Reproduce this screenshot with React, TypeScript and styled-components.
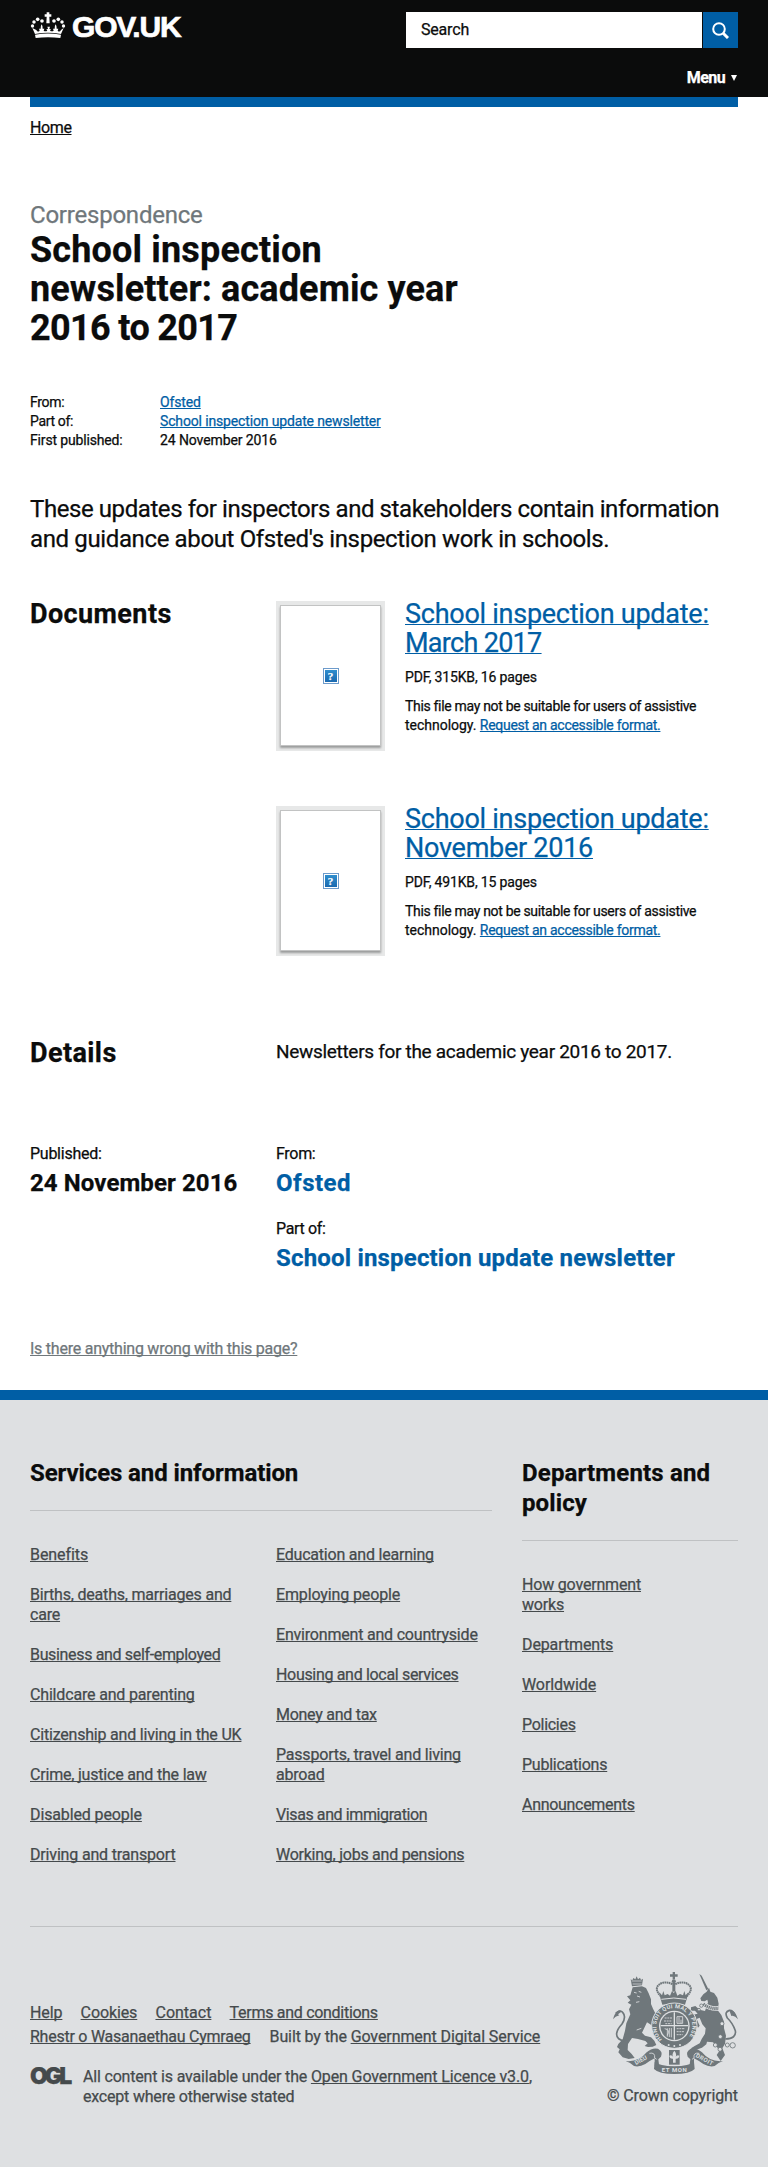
import React from "react";
import styled, { createGlobalStyle, css } from "styled-components";

const GlobalStyle = createGlobalStyle`
  *, *::before, *::after { box-sizing: border-box; }
  body {
    margin: 0;
    background: #fff;
    color: #0b0c0c;
    font-family: Roboto, "Liberation Sans", sans-serif;
    font-size: 16px;
    line-height: 20px;
    -webkit-text-stroke: 0.25px;
  }
  svg text { -webkit-text-stroke: 0; }
  h1, h2, p, dl, dd, dt, ul { margin: 0; padding: 0; font-weight: inherit; }
  ul { list-style: none; }
`;

type Track = { $track?: number };

const tracked = css<Track>`
  letter-spacing: ${({ $track = 0 }) => $track}px;
`;

const Span = styled.span<Track>`
  ${tracked}
`;

const Link = styled.a<Track & { $tone?: "ink" | "blue" | "muted" | "footer" }>`
  ${tracked}
  color: ${({ $tone }) =>
    $tone === "ink" ? "#0b0c0c" : $tone === "muted" ? "#6f777b" : $tone === "footer" ? "#454a4c" : "#005ea5"};
  text-decoration: underline;
  text-decoration-thickness: 1px;
  text-underline-offset: 1px;
  text-decoration-skip-ink: none;
`;

/* Header */

const Header = styled.header`
  display: flex;
  justify-content: space-between;
  height: 97px;
  padding: 12px 30px 0;
  background: #0b0c0c;
`;

const Brand = styled.a`
  display: flex;
  align-items: flex-start;
  gap: 6px;
  height: 30px;
  color: #fff;
`;

const BrandName = styled.span`
  font: bold 30px/30px "Liberation Sans", Arial, sans-serif;
  letter-spacing: -1.2px;
  -webkit-text-stroke: 0.7px;
`;

const HeaderTools = styled.div`
  display: flex;
  flex-direction: column;
  align-items: flex-end;
  width: 332px;
`;

const SearchForm = styled.div`
  display: flex;
  gap: 1px;
  width: 100%;
  height: 36px;
`;

const SearchField = styled.div`
  flex: 1;
  padding: 8px 15px;
  background: #fff;
`;

const SearchButton = styled.div`
  display: flex;
  align-items: center;
  justify-content: center;
  width: 35px;
  background: #005ea5;
`;

const MenuToggle = styled.a<Track>`
  ${tracked}
  display: flex;
  align-items: center;
  gap: 6px;
  margin-top: 20px;
  padding-right: 1px;
  color: #fff;
  font-weight: 700;
`;

const Arrow = styled.i`
  border: solid transparent;
  border-width: 6px 3px 0;
  border-top-color: #fff;
`;

const BlueBar = styled.div`
  height: 10px;
  margin: 0 30px;
  background: #005ea5;
`;

/* Main content */

const Main = styled.main`
  padding: 11px 30px 31px;
`;

const Breadcrumb = styled.nav`
  height: 20px;
`;

const Context = styled.p<Track>`
  ${tracked}
  margin-top: 62px;
  color: #6f777b;
  font-size: 24px;
  line-height: 30px;
`;

const Title = styled.h1`
  display: flex;
  flex-direction: column;
  padding-top: 1px;
  font-size: 36px;
  font-weight: 700;
  line-height: 39px;
`;

const MetaList = styled.dl`
  display: grid;
  grid-template-columns: 130px 1fr;
  margin-top: 45px;
  font-size: 14px;
  line-height: 19px;
`;

const Lead = styled.p`
  display: flex;
  flex-direction: column;
  margin-top: 44px;
  font-size: 24px;
  line-height: 30px;
`;

const Section = styled.section<{ $top: number }>`
  display: grid;
  grid-template-columns: 246px 1fr;
  margin-top: ${({ $top }) => $top}px;
`;

const SectionTitle = styled.h2<Track>`
  ${tracked}
  font-size: 27px;
  font-weight: 700;
  line-height: 29px;
`;

const Documents = styled.div`
  display: flex;
  flex-direction: column;
  gap: 54px;
`;

const Document = styled.article`
  display: grid;
  grid-template-columns: 109px 1fr;
  column-gap: 20px;
  height: 151px;
`;

const Thumbnail = styled.div`
  height: 150px;
  margin-top: 1px;
  padding: 4px;
  background: #e7e8e8;
`;

const Sheet = styled.div`
  display: flex;
  align-items: center;
  justify-content: center;
  height: 141px;
  border: 1px solid #c2c3c3;
  background: #fff;
  box-shadow: 0 2px 2px #9b9c9c;
`;

const MissingIcon = styled.span`
  width: 16px;
  height: 16px;
  border: 1px solid #6d9bcb;
  outline: 1px solid #fff;
  outline-offset: -2px;
  background: linear-gradient(#3191d0, #1866ad);
  color: #fff;
  font: bold 11px/14px "Liberation Serif", serif;
  text-align: center;
`;

const DocTitle = styled.h2`
  display: flex;
  flex-direction: column;
  align-items: flex-start;
  font-size: 27px;
  line-height: 29px;
`;

const Small = styled.p<Track>`
  ${tracked}
  margin-top: 10px;
  font-size: 14px;
  line-height: 19px;
`;

const Body = styled.p<Track>`
  ${tracked}
  font-size: 19px;
  line-height: 25px;
`;

const History = styled.div`
  display: grid;
  grid-template-columns: 246px 1fr;
  margin-top: 76px;
`;

const Stack = styled.div`
  display: flex;
  flex-direction: column;
  gap: 21px;
`;

const Fact = styled.div`
  display: flex;
  flex-direction: column;
  gap: 4px;
`;

const FactValue = styled.span<Track & { $link?: boolean }>`
  ${tracked}
  color: ${({ $link }) => ($link ? "#005ea5" : "#0b0c0c")};
  font-size: 24px;
  font-weight: 700;
  line-height: 30px;
`;

const Report = styled.div`
  margin-top: 66px;
`;

/* Footer */

const Footer = styled.footer`
  height: 777px;
  padding: 58px 30px 0;
  border-top: 10px solid #005ea5;
  background: #dee0e2;
  color: #454a4c;
`;

const Categories = styled.div`
  display: grid;
  grid-template-columns: 462px 216px;
  column-gap: 30px;
  padding-bottom: 61px;
  border-bottom: 1px solid #bfc1c3;
`;

const CategoryTitle = styled.h2`
  display: flex;
  flex-direction: column;
  margin-bottom: 34px;
  padding-bottom: 22px;
  border-bottom: 1px solid #bfc1c3;
  color: #0b0c0c;
  font-size: 24px;
  font-weight: 700;
  line-height: 30px;
`;

const Columns = styled.div`
  display: grid;
  grid-template-columns: 216px 216px;
  column-gap: 30px;
`;

const LinkList = styled.ul<{ $width?: number }>`
  display: flex;
  flex-direction: column;
  gap: 20px;
  width: ${({ $width }) => ($width ? `${$width}px` : "auto")};
`;

const FooterMeta = styled.div`
  display: flex;
  justify-content: space-between;
`;

const Support = styled.div`
  padding-top: 74px;
`;

const SupportRow = styled.div<{ $gap: number }>`
  display: flex;
  gap: ${({ $gap }) => $gap}px;
  line-height: 24px;
  white-space: pre;
`;

const Licence = styled.div`
  display: flex;
  gap: 12px;
  margin-top: 18px;
`;

const OglLogo = styled.span`
  width: 41px;
  font: 900 23px/18px Inter, sans-serif;
  letter-spacing: -3px;
`;

const LicenceText = styled.p`
  display: flex;
  flex-direction: column;
`;

const Copyright = styled.div`
  display: flex;
  flex-direction: column;
  align-items: flex-end;
  gap: 12px;
  padding-top: 45px;
`;

function Crown() {
  return (
    <svg width="36" height="27" viewBox="90 36 108 81" fill="#fff">
      <path d="M140 37h8v6h6v7h-6l1 20h-10l1-20h-6v-7h6z" />
      <g>
        <circle cx="97.500" cy="78" r="5" />
        <circle cx="102" cy="66" r="5.200" />
        <circle cx="113" cy="58" r="5.500" />
        <circle cx="126" cy="63" r="5.500" />
        <circle cx="162" cy="63" r="5.500" />
        <circle cx="175" cy="58" r="5.500" />
        <circle cx="186" cy="66" r="5.200" />
        <circle cx="190.500" cy="78" r="5" />
      </g>
      <path d="M97 84l8 18q39-8 78 0l8-18-8 6q-4 8-10 2l2-6-5 0q1-7-3-13-4 6-3 13l-5 0 2 6q-5 4-11 0l3-4-5-1 2-7h-8l2 7-5 1 3 4q-6 4-11 0l2-6h-5q1-7-3-13-4 6-3 13h-5l2 6q-6 6-10-2z" />
      <path d="M105 104q39-7 78 0l-2 10q-37-4-74 0z" />
    </svg>
  );
}

function Crest() {
  const ink = "#6f777b";
  const paper = "#dee0e2";
  const ribbonEnd =
    "M59 288Q98 292 122 262Q138 247 156 251Q172 260 165 275L157 283L160 306L146 304L146 280Q130 288 118 297Q100 307 84 303Q76 294 59 288Z";
  return (
    <svg width="125" height="102" viewBox="21 21 375 306" fill={ink}>
      {/* crown */}
      <path d="M200 21h7v7h8v7h-8v8h-7v-8h-8v-7h8z" />
      <circle cx="203.500" cy="49" r="6" />
      <g fill="none" stroke={ink} strokeWidth="6" strokeDasharray="5 1.500">
        <path d="M165 94Q145 74 157 61Q174 45 200 58" />
        <path d="M242 94Q262 74 250 61Q233 45 207 58" />
      </g>
      <path d="M199 54h9v26h-9z" />
      <path d="M160 82l8 9 4-13 4 13 9-4 7 5 6-14 5 6 6-6 5 14 8-5 9 4 4-13 4 13 8-9-4 17-6 20q-34-6-68 0l-6-20z" />
      <path d="M166 103q38-8 74 0" fill="none" stroke={paper} strokeWidth="3" />

      {/* lion */}
      <path d="M74 43l5 3 3-7 6 4 4-9 4 9 6-5 3 7 6-4-3 20-30 3z" />
      <path d="M77 48h30M80 57h27" stroke={paper} strokeWidth="2" />
      <path d="M80 67l28-3 12 5 8 16 7 18 0 14 6 14 8 16 10 13-4 18-9 14-10-12-13-8-5 10-10 21 9 9 18 5 10 10 6 13-11 5-14 1-10-3 9-8-7-7-22-6-18-3-12 18-1 18 12 12 9 12-18 3-18-5-13-15 4-9-8-7 4-9 13-14 7-26 4-22 12-27-4-15 7-14-11-6 8-7-10-12 10-3z" />
      <path d="M84 82l8 2M98 79l8 3M93 93l9 3M90 112l10-2M106 190l-14 5" fill="none" stroke={paper} strokeWidth="2.500" />
      <path d="M60 228Q30 226 32 205Q34 192 48 177Q62 155 50 142Q43 133 29 145" fill="none" stroke={ink} strokeWidth="5" />
      <path d="M21 163q4-19 18-27l9 3-12 9 4 3q-13 3-19 12z" />

      {/* unicorn */}
      <path d="M280 27l7 5 20 40-6 4z" />
      <path d="M309 68L313 80L324 84L334 98L338 116L335 136L346 150L354 170L354 190L360 212L357 236L349 250L357 270L344 288L332 270L340 258L333 246L321 232L303 230L301 238L288 248L262 257L255 250L266 243L281 235L287 222L297 206L299 190L289 178L281 158L272 162L281 182L276 188L268 174L257 160L261 149L275 146L267 137L255 137L255 127L268 123L281 134L297 138L301 126L306 112L304 104L296 109L286 108L283 100L292 88L302 80Z" />
      <path d="M292 117q20 16 46 13" fill="none" stroke={paper} strokeWidth="14" />
      <path d="M292 117q20 16 46 13" fill="none" stroke={ink} strokeWidth="9" strokeDasharray="4 2" />
      <path d="M358 222Q392 221 388 197Q380 174 364 159Q354 141 370 136Q381 135 387 151" fill="none" stroke={ink} strokeWidth="5" />
      <path d="M370 136q17-4 26 27-10-13-20-10z" />
      <g fill={paper} stroke={ink} strokeWidth="2.500">
        <circle cx="286" cy="122" r="5" />
        <circle cx="279" cy="134" r="4" />
        <circle cx="348" cy="176" r="6" />
        <circle cx="343" cy="215" r="6" />
        <circle cx="328" cy="240" r="6" />
        <circle cx="342" cy="253" r="6" />
        <circle cx="364" cy="240" r="6" />
        <circle cx="380" cy="241" r="8" />
      </g>

      {/* garter and shield */}
      <circle cx="205" cy="182" r="68" stroke={paper} strokeWidth="3" />
      <circle cx="205" cy="183" r="46" fill={paper} />
      <circle cx="205" cy="183" r="42" />
      <path d="M205 142v82M164 182h82" stroke={paper} strokeWidth="4" />
      <g fill="none" stroke={paper} strokeWidth="2.500">
        <path d="M176 159h22M174 168h24M178 176h19" strokeDasharray="6 2" />
        <path d="M176 191q18 3 8 20M184 190v25M190 189v27M196 189v28" />
        <path d="M212 191h25M212 200h24M212 209h18" strokeDasharray="6 2" />
        <path d="M213 155h17v20h-17zM219 157v16M225 164v11" />
      </g>
      <path id="garter" d="M168 223A54 54 0 1 1 242 223" fill="none" />
      <text fill={paper} fontSize="17" fontWeight="700" fontFamily="Roboto, sans-serif">
        <textPath href="#garter" textLength="245">HONI SOIT QUI MAL Y PENSE</textPath>
      </text>
      <circle cx="188" cy="240" r="3" fill={paper} />
      <circle cx="205" cy="243" r="3" fill={paper} />
      <circle cx="222" cy="240" r="3" fill={paper} />

      {/* motto ribbon */}
      <path d={ribbonEnd} />
      <path d={ribbonEnd} transform="translate(410 0) scale(-1 1)" />
      <g fill="none" stroke={paper} strokeWidth="2.500">
        <path d="M130 265q18-4 16 14l6 4M280 265q-18-4-16 14l-6 4" />
      </g>
      <path d="M146 291Q160 303 205 304Q250 303 264 291L266 312Q252 327 205 327Q158 327 144 312Z" />
      <path d="M189 255h32v44h-32z" />
      <path d="M205 257q9 11 3 20 5-9 12-5-1 10-11 9v12h-8v-12q-10 1-11-9 7-4 12 5-6-9 3-20z" fill={paper} />
      <g fill={paper} fontFamily="Roboto, sans-serif" fontWeight="700" fontSize="18">
        <text x="90" y="300" transform="rotate(-28 90 300)">DIEU</text>
        <text x="167" y="322" textLength="75">ET MON</text>
        <text x="268" y="275" transform="rotate(29 268 275)" textLength="56">DROIT</text>
      </g>
    </svg>
  );
}

const documents = [
  { lines: [["School inspection update:", -0.26], ["March 2017", -0.7]], info: "PDF, 315KB, 16 pages" },
  { lines: [["School inspection update:", -0.26], ["November 2016", -0.26]], info: "PDF, 491KB, 15 pages" },
] as { lines: [string, number][]; info: string }[];

const services: [string, number][][] = [
  [
    ["Benefits", -0.08],
    ["Births, deaths, marriages and care", -0.2],
    ["Business and self-employed", -0.34],
    ["Childcare and parenting", -0.17],
    ["Citizenship and living in the UK", -0.2],
    ["Crime, justice and the law", -0.2],
    ["Disabled people", -0.12],
    ["Driving and transport", -0.17],
  ],
  [
    ["Education and learning", -0.21],
    ["Employing people", -0.13],
    ["Environment and countryside", -0.2],
    ["Housing and local services", -0.32],
    ["Money and tax", -0.27],
    ["Passports, travel and living abroad", -0.2],
    ["Visas and immigration", -0.4],
    ["Working, jobs and pensions", -0.25],
  ],
];

const departments: [string, number][] = [
  ["How government works", -0.18],
  ["Departments", -0.12],
  ["Worldwide", -0.08],
  ["Policies", -0.28],
  ["Publications", -0.24],
  ["Announcements", -0.3],
];

function FooterLinks({ items, width }: { items: [string, number][]; width?: number }) {
  return (
    <LinkList $width={width}>
      {items.map(([label, track]) => (
        <li key={label}>
          <Link $tone="footer" $track={track}>{label}</Link>
        </li>
      ))}
    </LinkList>
  );
}

export default function App() {
  return (
    <>
      <GlobalStyle />
      <Header>
        <Brand>
          <Crown />
          <BrandName>GOV.UK</BrandName>
        </Brand>
        <HeaderTools>
          <SearchForm>
            <SearchField><Span $track={-0.19}>Search</Span></SearchField>
            <SearchButton>
              <svg width="17" height="17" viewBox="0 0 17 17" fill="none" stroke="#fff">
                <circle cx="7" cy="7" r="5.800" strokeWidth="2" />
                <path d="M11.200 11.200l4.800 4.800" strokeWidth="3" />
              </svg>
            </SearchButton>
          </SearchForm>
          <MenuToggle $track={-0.6}>Menu<Arrow /></MenuToggle>
        </HeaderTools>
      </Header>
      <BlueBar />

      <Main>
        <Breadcrumb><Link $tone="ink" $track={-0.39}>Home</Link></Breadcrumb>
        <Context $track={-0.22}>Correspondence</Context>
        <Title>
          <Span $track={0.16}>School inspection</Span>
          <Span $track={0.12}>newsletter: academic year</Span>
          <Span $track={-0.65}>2016 to 2017</Span>
        </Title>

        <MetaList>
          <dt><Span $track={-0.3}>From:</Span></dt>
          <dd><Link $track={-0.15}>Ofsted</Link></dd>
          <dt><Span $track={-0.34}>Part of:</Span></dt>
          <dd><Link $track={-0.15}>School inspection update newsletter</Link></dd>
          <dt><Span $track={-0.16}>First published:</Span></dt>
          <dd><Span $track={-0.1}>24 November 2016</Span></dd>
        </MetaList>

        <Lead>
          <Span $track={-0.42}>These updates for inspectors and stakeholders contain information</Span>
          <Span $track={-0.37}>and guidance about Ofsted's inspection work in schools.</Span>
        </Lead>

        <Section $top={46}>
          <SectionTitle $track={0.4}>Documents</SectionTitle>
          <Documents>
            {documents.map((doc) => (
              <Document key={doc.info}>
                <Thumbnail><Sheet><MissingIcon>?</MissingIcon></Sheet></Thumbnail>
                <div>
                  <DocTitle>
                    {doc.lines.map(([line, track]) => <Link key={line} $track={track}>{line}</Link>)}
                  </DocTitle>
                  <Small $track={-0.16}>{doc.info}</Small>
                  <Small>
                    <Span $track={-0.32}>This file may not be suitable for users of assistive</Span><br />
                    <Span $track={-0.02}>technology. </Span>
                    <Link $track={-0.28}>Request an accessible format.</Link>
                  </Small>
                </div>
              </Document>
            ))}
          </Documents>
        </Section>

        <Section $top={83}>
          <SectionTitle $track={0.4}>Details</SectionTitle>
          <Body $track={-0.31}>Newsletters for the academic year 2016 to 2017.</Body>
        </Section>

        <History>
          <Fact>
            <Span $track={-0.26}>Published:</Span>
            <FactValue $track={0.1}>24 November 2016</FactValue>
          </Fact>
          <Stack>
            <Fact>
              <Span $track={-0.3}>From:</Span>
              <FactValue $link $track={0.5}>Ofsted</FactValue>
            </Fact>
            <Fact>
              <Span $track={-0.35}>Part of:</Span>
              <FactValue $link $track={0.18}>School inspection update newsletter</FactValue>
            </Fact>
          </Stack>
        </History>

        <Report><Link $tone="muted" $track={-0.24}>Is there anything wrong with this page?</Link></Report>
      </Main>

      <Footer>
        <Categories>
          <div>
            <CategoryTitle><Span $track={-0.1}>Services and information</Span></CategoryTitle>
            <Columns>
              {services.map((items, i) => <FooterLinks key={i} items={items} />)}
            </Columns>
          </div>
          <div>
            <CategoryTitle>
              <Span $track={0.16}>Departments and</Span>
              <Span $track={0.1}>policy</Span>
            </CategoryTitle>
            <FooterLinks items={departments} width={150} />
          </div>
        </Categories>

        <FooterMeta>
          <Support>
            <SupportRow $gap={18.2}>
              <Link $tone="footer" $track={-0.1}>Help</Link>
              <Link $tone="footer" $track={-0.1}>Cookies</Link>
              <Link $tone="footer" $track={0}>Contact</Link>
              <Link $tone="footer" $track={-0.29}>Terms and conditions</Link>
            </SupportRow>
            <SupportRow $gap={19}>
              <Link $tone="footer" $track={-0.25}>Rhestr o Wasanaethau Cymraeg</Link>
              <span>
                <Span $track={-0.13}>Built by the </Span>
                <Link $tone="footer" $track={-0.09}>Government Digital Service</Link>
              </span>
            </SupportRow>
            <Licence>
              <OglLogo>OGL</OglLogo>
              <LicenceText>
                <span>
                  <Span $track={-0.18}>All content is available under the </Span>
                  <Link $tone="footer" $track={-0.11}>Open Government Licence v3.0</Link>,
                </span>
                <Span $track={-0.2}>except where otherwise stated</Span>
              </LicenceText>
            </Licence>
          </Support>
          <Copyright>
            <Crest />
            <Span $track={-0.08}>© Crown copyright</Span>
          </Copyright>
        </FooterMeta>
      </Footer>
    </>
  );
}
